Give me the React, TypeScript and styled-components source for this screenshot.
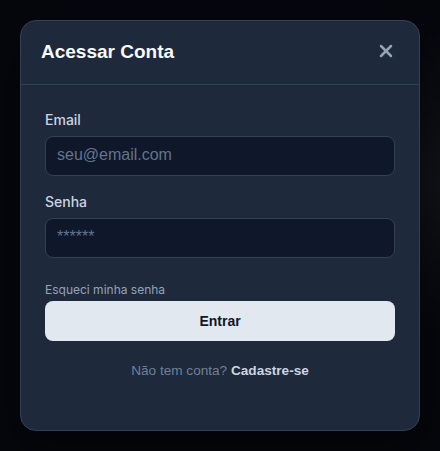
import styled, { createGlobalStyle } from 'styled-components'
import { X } from 'lucide-react'

const GlobalStyle = createGlobalStyle`
  html,
  body {
    margin: 0;
    padding: 0;
    background: #05070c;
  }

  * {
    box-sizing: border-box;
  }
`

export default function App(): JSX.Element {
  return (
    <>
      <GlobalStyle />
      <Overlay>
        <Modal>
          <Header>
            <Title>Acessar Conta</Title>
            <CloseButton aria-label='Fechar'>
              <X size={20} strokeWidth={3} />
            </CloseButton>
          </Header>
          <Body>
            <Field>
              <Label htmlFor='email'>Email</Label>
              <Input id='email' type='email' placeholder='seu@email.com' />
            </Field>
            <Field>
              <Label htmlFor='senha'>Senha</Label>
              <Input id='senha' type='password' placeholder='******' />
            </Field>
            <Actions>
              <ForgotLink>Esqueci minha senha</ForgotLink>
              <SubmitButton>Entrar</SubmitButton>
            </Actions>
            <SignupText>
              Não tem conta? <SignupLink>Cadastre-se</SignupLink>
            </SignupText>
          </Body>
        </Modal>
      </Overlay>
    </>
  )
}

const Overlay = styled.div`
  width: 440px;
  height: 451px;
  display: flex;
  align-items: center;
  justify-content: center;
  background: radial-gradient(
      ellipse at 100% 40%,
      rgba(40, 40, 45, 0.35),
      transparent 40%
    ),
    #05070c;
`

const Modal = styled.div`
  width: 400px;
  height: 411px;
  background: #1e293b;
  border: 1px solid #334155;
  border-radius: 16px;
  display: flex;
  flex-direction: column;
  overflow: hidden;
  box-shadow: 0 20px 50px rgba(0, 0, 0, 0.5);
`

const Header = styled.div`
  height: 64px;
  padding: 0 23px 0 20px;
  display: flex;
  align-items: center;
  justify-content: space-between;
  border-bottom: 1px solid #334155;
`

const Title = styled.h2`
  margin: 0;
  font-family: 'Liberation Sans', Arial, sans-serif;
  font-size: 19px;
  font-weight: 700;
  color: #f8fafc;
  padding-bottom: 2px;
`

const CloseButton = styled.button`
  background: none;
  border: none;
  padding: 0;
  color: #94a3b8;
  display: flex;
  cursor: pointer;
  margin-bottom: 3px;
`

const Body = styled.div`
  padding: 25px 24px 24px;
  display: flex;
  flex-direction: column;
`

const Field = styled.div`
  display: flex;
  flex-direction: column;
  gap: 6px;
  margin-bottom: 16px;
`

const Label = styled.label`
  font-family: Inter, 'Noto Sans', sans-serif;
  font-size: 14px;
  font-weight: 500;
  line-height: 20px;
  color: #cbd5e1;
`

const Input = styled.input`
  height: 40px;
  width: 100%;
  padding: 0 11px 2px;
  background: #0f172a;
  border: 1px solid #334155;
  border-radius: 8px;
  font-family: 'Liberation Sans', Arial, sans-serif;
  font-size: 16px;
  color: #e2e8f0;
  outline: none;

  &::placeholder {
    color: #64748b;
  }
`

const Actions = styled.div`
  display: flex;
  flex-direction: column;
  gap: 3px;
  margin-top: 8px;
`

const ForgotLink = styled.a`
  font-family: Inter, 'Noto Sans', sans-serif;
  font-size: 12px;
  line-height: 16px;
  color: #94a3b8;
  cursor: pointer;
`

const SubmitButton = styled.button`
  height: 40px;
  width: 100%;
  background: #e2e8f0;
  border: none;
  border-radius: 8px;
  font-family: 'Liberation Sans', Arial, sans-serif;
  font-size: 14px;
  font-weight: 700;
  color: #0f172a;
  cursor: pointer;
`

const SignupText = styled.p`
  margin: 21px 0 0;
  text-align: center;
  font-family: 'Liberation Sans', Arial, sans-serif;
  font-size: 13.6px;
  line-height: 18px;
  color: #718096;
`

const SignupLink = styled.a`
  font-weight: 700;
  color: #cbd5e1;
  cursor: pointer;
`
